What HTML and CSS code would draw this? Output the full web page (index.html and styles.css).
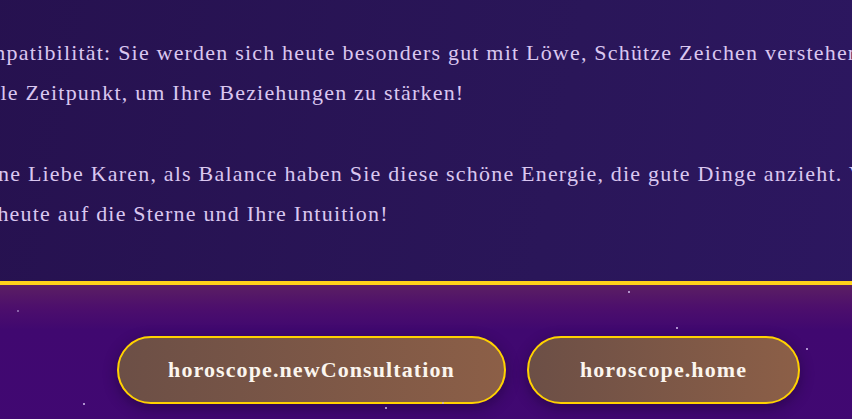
FILE: index.html
```html
<!DOCTYPE html>
<html lang="de">
<head>
<meta charset="utf-8">
<title>Horoskop</title>
<link rel="stylesheet" href="styles.css">
</head>
<body>
<div class="page">
  <section class="reading">
    <p class="para">Kompatibilität: Sie werden sich heute besonders gut mit Löwe, Schütze Zeichen verstehen. Es ist der<br>ideale Zeitpunkt, um Ihre Beziehungen zu stärken!</p>
    <p class="para">Meine Liebe Karen, als Balance haben Sie diese schöne Energie, die gute Dinge anzieht. Vertrauen<br>Sie heute auf die Sterne und Ihre Intuition!</p>
  </section>
  <footer class="actions">
    <span class="star s1"></span>
    <span class="star s2"></span>
    <span class="star s3"></span>
    <span class="star s4"></span>
    <span class="star s5"></span>
    <span class="star s6"></span>
    <span class="star s7"></span>
    <div class="buttons">
      <button class="btn btn-wide">horoscope.newConsultation</button>
      <button class="btn btn-narrow">horoscope.home</button>
    </div>
  </footer>
</div>
</body>
</html>
```
FILE: styles.css
```css
html, body {
  margin: 0;
  padding: 0;
  overflow: hidden;
  background: #3e0769;
}
body {
  width: 852px;
  height: 419px;
  font-family: "Liberation Serif", "DejaVu Serif", serif;
}
.page {
  width: 983px;
  margin-left: -33px;
}
.reading {
  height: 281px;
  box-sizing: border-box;
  padding-top: 33px;
  background: linear-gradient(100deg, #26114f 0%, #2a1659 60%, #2d1762 100%);
}
.para {
  margin: 0 0 41px -8px;
  font-size: 22px;
  letter-spacing: 1.2px;
  line-height: 40px;
  color: #dac7f0;
  white-space: nowrap;
}
.actions {
  position: relative;
  border-top: 4px solid #ffd21a;
  height: 200px;
  box-sizing: border-box;
  padding-top: 51px;
  background: linear-gradient(180deg, #5b1f63 0px, #4d0f6c 22px, #400870 45px, #410873 100%);
}
.buttons {
  display: flex;
  justify-content: center;
  gap: 21px;
}
.btn {
  height: 68px;
  box-sizing: border-box;
  border: 2px solid #ffd200;
  border-radius: 34px;
  background: linear-gradient(90deg, #6c4f46 0%, #8c5f47 100%);
  color: #fbf5ee;
  font-family: "Liberation Serif", "DejaVu Serif", serif;
  font-weight: bold;
  font-size: 22px;
  letter-spacing: 1.1px;
  padding: 0;
  box-shadow: 0 4px 14px rgba(20, 0, 40, 0.45);
}
.btn-wide { width: 389px; }
.btn-narrow { width: 273px; }
.star {
  position: absolute;
  width: 2px;
  height: 2px;
  background: #c9b3e6;
  opacity: 0.8;
}
.s1 { left: 50px; top: 25px; opacity: 0.5; }
.s2 { left: 661px; top: 6px; }
.s3 { left: 709px; top: 42px; }
.s4 { left: 839px; top: 63px; }
.s5 { left: 116px; top: 118px; }
.s6 { left: 418px; top: 122px; }
.s7 { left: 475px; top: 117px; opacity: 0.6; }
```
